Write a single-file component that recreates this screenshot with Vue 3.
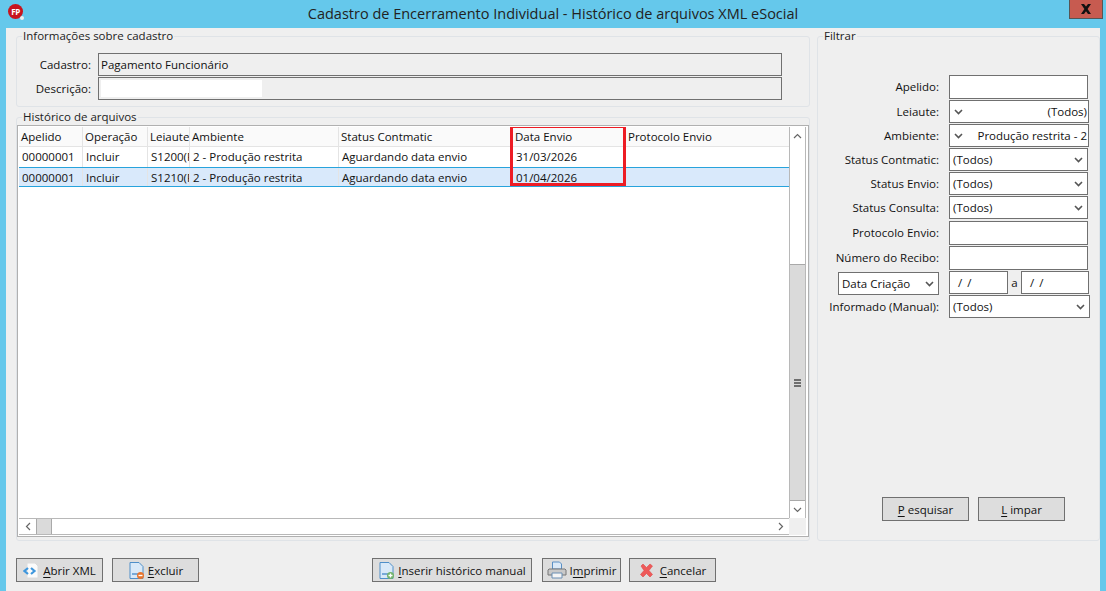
<template>
  <div class="window">
    <header class="titlebar">
      <span class="app-logo">FP<i></i></span>
      <span class="title">Cadastro de Encerramento Individual - Histórico de arquivos XML eSocial</span>
      <button class="close">
        <svg width="12" height="10" viewBox="0 0 12 10"><path d="M1 0h3l2 2.6L8 0h3L7.6 5 11 10H8L6 7.3 4 10H1l3.4-5z" fill="#111" /></svg>
      </button>
    </header>

    <div class="body">
      <div class="main">
        <div class="left">
          <fieldset class="group info">
            <legend>Informações sobre cadastro</legend>
            <div class="info-row">
              <label>Cadastro:</label>
              <div class="readonly">Pagamento Funcionário</div>
            </div>
            <div class="info-row">
              <label>Descrição:</label>
              <div class="readonly"><span class="masked"></span></div>
            </div>
          </fieldset>

          <fieldset class="group history">
            <legend>Histórico de arquivos</legend>
            <div class="grid-frame">
              <div class="grid-top">
                <div class="grid-data">
                  <div class="grid-row head">
                    <div v-for="(c, i) in columns" :key="c.name" class="cell" :style="{ width: c.w + 'px' }">{{ c.name }}</div>
                  </div>
                  <div v-for="(r, ri) in rows" :key="ri" class="grid-row" :class="{ selected: ri === 1 }">
                    <div v-for="(v, i) in r" :key="i" class="cell" :style="{ width: columns[i].w + 'px' }">{{ v }}</div>
                  </div>
                  <div class="highlight"></div>
                </div>
                <div class="vscroll">
                  <div class="sb-btn">
                    <svg width="9" height="6" viewBox="0 0 9 6"><path d="M1 5l3.5-3.5L8 5" fill="none" stroke="#666" stroke-width="1.2" /></svg>
                  </div>
                  <div class="v-track"></div>
                  <div class="v-thumb"><span></span><span></span><span></span></div>
                  <div class="sb-btn">
                    <svg width="9" height="6" viewBox="0 0 9 6"><path d="M1 1l3.5 3.5L8 1" fill="none" stroke="#666" stroke-width="1.2" /></svg>
                  </div>
                </div>
              </div>
              <div class="hscroll">
                <div class="sb-btn h">
                  <svg width="6" height="9" viewBox="0 0 6 9"><path d="M5 1L1.5 4.5 5 8" fill="none" stroke="#666" stroke-width="1.2" /></svg>
                </div>
                <div class="h-thumb"></div>
                <div class="h-track"></div>
                <div class="sb-btn h">
                  <svg width="6" height="9" viewBox="0 0 6 9"><path d="M1 1l3.5 3.5L1 8" fill="none" stroke="#666" stroke-width="1.2" /></svg>
                </div>
                <div class="corner"></div>
              </div>
            </div>
          </fieldset>
        </div>

        <fieldset class="group filter">
          <legend>Filtrar</legend>
          <div class="filter-rows">
            <div v-for="f in filters" :key="f.label" class="filter-row" :style="{ height: f.step + 'px' }">
              <template v-if="f.kind === 'date'">
                <div class="select date-type"><span>{{ f.label }}</span><svg class="chev" width="9" height="6" viewBox="0 0 9 6"><path d="M1 1l3.5 3.5L8 1" fill="none" stroke="#555" stroke-width="1.6" /></svg></div>
                <div class="date-range">
                  <div class="input date">/ /</div>
                  <span class="a">a</span>
                  <div class="input date second">/ /</div>
                </div>
              </template>
              <template v-else>
                <label>{{ f.label }}</label>
                <div v-if="f.kind === 'input'" class="input"></div>
                <div v-else-if="f.kind === 'left'" class="select left-chev">
                  <svg class="chev" width="9" height="6" viewBox="0 0 9 6"><path d="M1 1l3.5 3.5L8 1" fill="none" stroke="#555" stroke-width="1.6" /></svg>
                  <span>{{ f.value }}</span>
                </div>
                <div v-else class="select" :class="{ wide: f.wide }">
                  <span>{{ f.value }}</span>
                  <svg class="chev" width="9" height="6" viewBox="0 0 9 6"><path d="M1 1l3.5 3.5L8 1" fill="none" stroke="#555" stroke-width="1.6" /></svg>
                </div>
              </template>
            </div>
          </div>
          <div class="filter-actions">
            <button class="btn search"><u>P</u>esquisar</button>
            <button class="btn search"><u>L</u>impar</button>
          </div>
        </fieldset>
      </div>

      <footer class="actions">
        <button class="btn w87">
          <svg width="17" height="17" viewBox="0 0 17 17">
            <path d="M4 1h8l3 3v12H4z" fill="#fbfbfb" stroke="#dcdcdc" />
            <path d="M5 6L1.5 9 5 12M8 6l3.5 3L8 12" fill="none" stroke="#3f97dd" stroke-width="2.2" />
          </svg>
          <span><u>A</u>brir XML</span>
        </button>
        <button class="btn w87">
          <svg width="17" height="19" viewBox="0 0 17 19">
            <path d="M2 1.500h9l4 4v12H2z" fill="#d9e9f8" stroke="#4e8fc9" />
            <path d="M4 13h7" stroke="#4e8fc9" stroke-width="1.400" />
            <circle cx="12.500" cy="14.500" r="3.500" fill="#e8742c" />
            <path d="M10.500 14.500h4" stroke="#fff" stroke-width="1.400" />
          </svg>
          <span><u>E</u>xcluir</span>
        </button>
        <button class="btn insert">
          <svg width="17" height="19" viewBox="0 0 17 19">
            <path d="M2 1.500h9l4 4v12H2z" fill="#d9e9f8" stroke="#4e8fc9" />
            <path d="M4 13h7" stroke="#4e8fc9" stroke-width="1.400" />
            <circle cx="12.500" cy="14.500" r="3.500" fill="#72b36a" />
            <path d="M10.500 14.500h4M12.500 12.500v4" stroke="#fff" stroke-width="1.300" />
          </svg>
          <span><u>I</u>nserir histórico manual</span>
        </button>
        <button class="btn print">
          <svg width="20" height="18" viewBox="0 0 20 18">
            <path d="M5.500 1h7l2 2v5h-9z" fill="#dbe9f7" stroke="#5a8fc4" />
            <path d="M2 8h16l1 1v5h-18v-5z" fill="#c9c9c9" stroke="#777" />
            <path d="M5 12h10v5H5z" fill="#f4f4f4" stroke="#6a8fb4" />
          </svg>
          <span>I<u>m</u>primir</span>
        </button>
        <button class="btn cancel">
          <svg width="15" height="15" viewBox="0 0 15 15">
            <path d="M2 3l2-2 3.500 3.500L11 1l2.500 2L10 7.500l3.500 4-2.500 2.500L7.500 10.500 4 14l-2.500-2.500L5 7.500z" fill="#ee5a5a" stroke="#dd4a4a" stroke-width=".6" />
          </svg>
          <span><u>C</u>ancelar</span>
        </button>
      </footer>
    </div>
  </div>
</template>

<script setup>
const columns = [
  { name: 'Apelido', w: 64 },
  { name: 'Operação', w: 65 },
  { name: 'Leiaute', w: 42 },
  { name: 'Ambiente', w: 149 },
  { name: 'Status Contmatic', w: 174 },
  { name: 'Data Envio', w: 113 },
  { name: 'Protocolo Envio', w: 164 },
]

const rows = [
  ['00000001', 'Incluir', 'S1200(F', '2 - Produção restrita', 'Aguardando data envio', '31/03/2026', ''],
  ['00000001', 'Incluir', 'S1210(F', '2 - Produção restrita', 'Aguardando data envio', '01/04/2026', ''],
]

const filters = [
  { label: 'Apelido:', kind: 'input', step: 25 },
  { label: 'Leiaute:', kind: 'left', value: '(Todos)', step: 24 },
  { label: 'Ambiente:', kind: 'left', value: 'Produção restrita - 2', step: 24 },
  { label: 'Status Contmatic:', kind: 'select', value: '(Todos)', step: 24 },
  { label: 'Status Envio:', kind: 'select', value: '(Todos)', step: 24 },
  { label: 'Status Consulta:', kind: 'select', value: '(Todos)', step: 25 },
  { label: 'Protocolo Envio:', kind: 'input', step: 25 },
  { label: 'Número do Recibo:', kind: 'input', step: 25 },
  { label: 'Data Criação', kind: 'date', step: 24 },
  { label: 'Informado (Manual):', kind: 'select', value: '(Todos)', wide: true, step: 24 },
]
</script>

<style>
html, body { margin: 0; background: #65c8eb; }
</style>

<style scoped>
.window {
  width: 1106px;
  height: 591px;
  overflow: hidden;
  display: flex;
  flex-direction: column;
  background: #65c8eb;
  font-family: "Open Sans", "Noto Sans", sans-serif;
  font-size: 11.5px;
  color: #111;
}

.titlebar {
  height: 28px;
  flex: none;
  position: relative;
  display: flex;
  align-items: center;
  justify-content: center;
}
.title { font-size: 14.500px; color: #222; margin-top: -1px; }
.app-logo {
  position: absolute;
  left: 8px;
  top: 4px;
  width: 15px;
  height: 15px;
  border-radius: 50%;
  background: #c8141e;
  color: #fff;
  font-size: 8px;
  font-weight: 700;
  line-height: 15px;
  text-align: center;
  letter-spacing: -0.5px;
}
.app-logo i {
  position: absolute;
  right: -1px;
  bottom: -1px;
  width: 4px;
  height: 4px;
  background: #eee;
  border-radius: 50%;
}
.close {
  position: absolute;
  left: 1069px;
  top: 0;
  width: 34px;
  height: 19px;
  padding: 0;
  border: 1px solid #555;
  border-top: 0;
  background: #c75b50;
  display: flex;
  align-items: center;
  justify-content: center;
}

.body {
  flex: 1;
  margin: 0 6px;
  padding: 1px 0 0 10px;
  background: #efefef;
  display: flex;
  flex-direction: column;
}
.main { display: flex; gap: 7px; }
.left { width: 794px; display: flex; flex-direction: column; gap: 3px; }

.group {
  margin: 0;
  min-width: 0;
  box-sizing: border-box;
  border: 1px solid #dfe3e7;
  border-radius: 3px;
  padding: 0;
}
.group legend {
  margin-left: 5px;
  padding: 0 1px;
  line-height: 14px;
  color: #222;
}
.info { height: 78px; padding-top: 9px; }
.info-row { display: flex; gap: 7px; height: 24px; align-items: center; }
.info-row label { width: 74px; text-align: right; }
.readonly {
  width: 684px;
  height: 23px;
  box-sizing: border-box;
  border: 1px solid #707070;
  background: #efefef;
  padding: 0 2px;
  line-height: 21px;
  display: flex;
  align-items: center;
}
.masked { width: 161px; height: 17px; margin-left: 0; background: #fff; }

.history { height: 431px; }
.grid-frame {
  margin: 1px 0 0 0;
  width: 792px;
  height: 412px;
  box-sizing: border-box;
  border: 1px solid #b0b0b0;
  padding: 1px 2px 1px 1px;
  display: flex;
  flex-direction: column;
  background: #fff;
}
.grid-top { flex: 1; display: flex; min-height: 0; }
.grid-data { width: 771px; position: relative; overflow: hidden; }
.grid-row { display: flex; height: 20px; box-sizing: border-box; white-space: nowrap; }
.grid-row.head { background: #fafafa; border-bottom: 1px solid #e4e4e4; }
.grid-row.selected {
  background: #d9e9fb;
  border-top: 1px solid #27a3dc;
  border-bottom: 1px solid #27a3dc;
}
.cell {
  flex: none;
  box-sizing: border-box;
  border-right: 1px solid #e4e4e4;
  padding: 0 0 0 2px;
  line-height: 19px;
  overflow: hidden;
}
.grid-row:not(.head) .cell { padding-left: 3px; }
.highlight {
  position: absolute;
  left: 491px;
  top: -2px;
  width: 116px;
  height: 61px;
  box-sizing: border-box;
  border: 3px solid #ed1c24;
  pointer-events: none;
}

.vscroll {
  width: 17px;
  display: flex;
  flex-direction: column;
  border-left: 1px solid #b8b8b8;
  border-right: 1px solid #b8b8b8;
  box-sizing: border-box;
}
.sb-btn {
  flex: none;
  height: 17px;
  display: flex;
  align-items: center;
  justify-content: center;
  background: #fff;
  box-sizing: border-box;
}
.v-track { height: 120px; background: #fff; }
.v-thumb {
  flex: 1;
  background: #dadada;
  border-top: 1px solid #a9a9a9;
  border-bottom: 1px solid #a9a9a9;
  display: flex;
  flex-direction: column;
  justify-content: center;
  align-items: center;
  gap: 1px;
}
.v-thumb span { width: 7px; height: 2px; background: #6e6e6e; }
.hscroll {
  flex: none;
  height: 17px;
  display: flex;
  box-sizing: border-box;
  border-top: 1px solid #b8b8b8;
  border-bottom: 1px solid #b8b8b8;
}
.sb-btn.h { width: 17px; height: 15px; }
.h-thumb { width: 16px; background: #dadada; border-left: 1px solid #a9a9a9; border-right: 1px solid #a9a9a9; box-sizing: border-box; }
.h-track { flex: 1; }
.corner { width: 17px; margin: -1px 0; background: #efefef; }

.filter { width: 283px; height: 512px; display: flex; flex-direction: column; }
.filter-rows { margin-top: 32px; }
.filter-row {
  display: flex;
  align-items: flex-start;
  gap: 10px;
}
.filter-row label { width: 121px; flex: none; text-align: right; line-height: 23px; }
.input, .select {
  box-sizing: border-box;
  background: #fff;
  border: 1px solid #707070;
  height: 23px;
  width: 139px;
}
.filter-row > .input { height: 24px; }
.select {
  display: flex;
  align-items: center;
  justify-content: space-between;
  padding: 0 4px 0 3px;
  white-space: nowrap;
}
.select.wide { width: 141px; }
.left-chev { width: 140px; padding: 0 1px 0 4px; }
.date-type { width: 101px; margin: 1px 0 0 20px; height: 23px; padding-left: 3px; }
.date-range { display: flex; align-items: center; }
.input.date {
  width: 59px;
  padding-left: 8px;
  line-height: 21px;
  word-spacing: 2px;
}
.input.date.second { width: 68px; }
.a { width: 13px; text-align: center; }

.filter-actions {
  display: flex;
  gap: 9px;
  margin: auto 0 0 64px;
  padding-bottom: 19px;
}

.actions { display: flex; margin-top: 17px; }
.btn {
  box-sizing: border-box;
  height: 24px;
  padding: 0;
  border: 1px solid #707070;
  background: #ddd;
  color: #111;
  font: inherit;
  display: flex;
  align-items: center;
  justify-content: center;
  gap: 3px;
  white-space: nowrap;
}
.btn u { text-underline-offset: 2px; }
.w87, .search { width: 87px; }
.w87:first-child { margin-right: 9px; }
.insert { width: 160px; margin-left: 173px; margin-right: 10px; }
.print { width: 79px; margin-right: 8px; }
.cancel { width: 87px; }
.cancel svg { margin-right: 3px; }
</style>
